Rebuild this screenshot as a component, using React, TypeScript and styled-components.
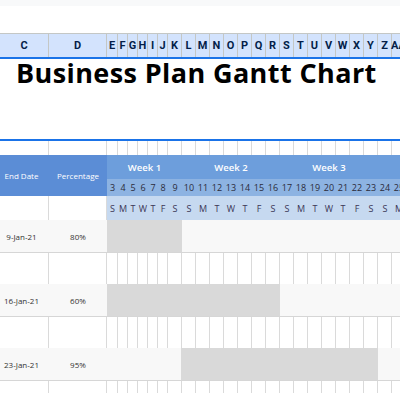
import React from "react";
import styled, { createGlobalStyle } from "styled-components";

const GlobalStyle = createGlobalStyle`
  html, body { margin: 0; padding: 0; background: #ffffff; overflow: hidden; }
  * { box-sizing: border-box; }
`;

const DAYS = Array.from({ length: 23 }, (_, i) => i + 3); // 3..25
const dayWidth = (d: number) => (d === 3 ? 11 : d < 9 ? 10 : 14);
const COL_WIDTHS = [49, 58, ...DAYS.map(dayWidth)];
const TEMPLATE = COL_WIDTHS.map((w) => `${w}px`).join(" ");
const LETTERS = ["C", "D", ..."EFGHIJKLMNOPQRSTUVWXYZ".split(""), "AA"];
const WEEKDAY = ["S", "M", "T", "W", "T", "F", "S"];

const WEEKS = [
  { label: "Week 1", start: 3, end: 9 },
  { label: "Week 2", start: 10, end: 16 },
  { label: "Week 3", start: 17, end: 23 },
  { label: "", start: 24, end: 25 },
];

const TASKS = [
  { end: "9-Jan-21", pct: "80%", from: 3, to: 9 },
  { end: "16-Jan-21", pct: "60%", from: 3, to: 16 },
  { end: "23-Jan-21", pct: "95%", from: 10, to: 23 },
];

const colOf = (day: number) => day; // day 3 -> grid column 3 (column E)

const Sheet = styled.div`
  width: 400px;
  height: 393px;
  overflow: hidden;
  font-family: "Open Sans", "Noto Sans", sans-serif;
  color: #333333;
`;

const TopStrip = styled.div`
  height: 6px;
  background: #f8f9fa;
`;

const ToolbarGap = styled.div`
  height: 27px;
  background: #ffffff;
`;

const SheetRow = styled.div<{ $h: number }>`
  display: grid;
  grid-template-columns: ${TEMPLATE};
  width: max-content;
  height: ${(p) => p.$h}px;
`;

const ColHeaderRow = styled(SheetRow)`
  background: #d3e3fd;
  border-top: 1px solid #c4c7c5;
  border-bottom: 2px solid #1a73e8;
`;

const ColHeaderCell = styled.div`
  border-right: 1px solid #c4c7c5;
  display: flex;
  align-items: center;
  justify-content: center;
  font-family: Roboto, "Liberation Sans", sans-serif;
  font-weight: 700;
  font-size: 11px;
  color: #041e49;
  white-space: nowrap;
`;

const TitleRow = styled.div`
  height: 82px;
  border-bottom: 2px solid #1a73e8;
  padding-left: 16px;
`;

const Title = styled.h1`
  margin: 0;
  font-family: "Open Sans", sans-serif;
  font-weight: 700;
  font-size: 27px;
  letter-spacing: 0.4px;
  line-height: 28px;
  color: #000000;
  white-space: nowrap;
`;

const GridCell = styled.div`
  border-right: 1px solid #dadada;
`;

const HeaderBand = styled.div`
  display: grid;
  grid-template-columns: ${TEMPLATE};
  grid-template-rows: 24px 17px;
  width: max-content;
`;

const LeftHeader = styled.div<{ $pad?: number }>`
  grid-row: 1 / 3;
  background: #5b8dd6;
  color: #ffffff;
  font-size: 8px;
  display: flex;
  align-items: center;
  justify-content: center;
  padding-right: ${(p) => p.$pad ?? 0}px;
  white-space: nowrap;
`;

const WeekCell = styled.div<{ $start: number; $end: number }>`
  grid-row: 1;
  grid-column: ${(p) => `${p.$start} / ${p.$end}`};
  background: #6d9edc;
  color: #ffffff;
  font-size: 9.5px;
  font-weight: 600;
  display: flex;
  align-items: center;
  justify-content: center;
  white-space: nowrap;
`;

const DayNumber = styled.div`
  grid-row: 2;
  background: #8db3e2;
  color: #2b2b3a;
  font-size: 9px;
  display: flex;
  align-items: center;
  justify-content: center;
`;

const LetterCell = styled.div`
  background: #c6d9f0;
  color: #3b3656;
  font-size: 9px;
  display: flex;
  align-items: center;
  justify-content: center;
`;

const TaskRow = styled(SheetRow)`
  background: #f8f8f8;
  border-bottom: 1px solid #d6d6d6;
`;

const TaskText = styled.div<{ $pad?: number }>`
  display: flex;
  align-items: center;
  justify-content: center;
  font-size: 8px;
  color: #333333;
  padding-right: ${(p) => p.$pad ?? 0}px;
  white-space: nowrap;
`;

const Bar = styled.div<{ $from: number; $to: number }>`
  grid-column: ${(p) => `${p.$from} / ${p.$to}`};
  background: #d9d9d9;
  margin-left: ${(p) => (p.$from > 3 ? -1 : 0)}px;
`;

const EmptyGridRow: React.FC<{ h: number }> = ({ h }) => (
  <SheetRow $h={h}>
    {COL_WIDTHS.map((_, i) => (
      <GridCell key={i} />
    ))}
  </SheetRow>
);

export default function App() {
  return (
    <>
      <GlobalStyle />
      <Sheet>
        <TopStrip />
        <ToolbarGap />
        <ColHeaderRow $h={26}>
          {LETTERS.map((l) => (
            <ColHeaderCell key={l}>{l}</ColHeaderCell>
          ))}
        </ColHeaderRow>
        <TitleRow>
          <Title>Business Plan Gantt Chart</Title>
        </TitleRow>
        <EmptyGridRow h={14} />
        <HeaderBand>
          <LeftHeader $pad={6}>End Date</LeftHeader>
          <LeftHeader>Percentage</LeftHeader>
          {WEEKS.map((w) => (
            <WeekCell key={w.start} $start={colOf(w.start)} $end={colOf(w.end) + 1}>
              {w.label}
            </WeekCell>
          ))}
          {DAYS.map((d) => (
            <DayNumber key={d}>{d}</DayNumber>
          ))}
        </HeaderBand>
        <SheetRow $h={24}>
          <GridCell />
          <GridCell />
          {DAYS.map((d) => (
            <LetterCell key={d}>{WEEKDAY[(d - 3) % 7]}</LetterCell>
          ))}
        </SheetRow>
        {TASKS.map((t) => (
          <React.Fragment key={t.end}>
            <TaskRow $h={33}>
              <TaskText $pad={6}>{t.end}</TaskText>
              <TaskText>{t.pct}</TaskText>
              <Bar $from={colOf(t.from)} $to={colOf(t.to) + 1} />
            </TaskRow>
            <EmptyGridRow h={31} />
          </React.Fragment>
        ))}
      </Sheet>
    </>
  );
}
